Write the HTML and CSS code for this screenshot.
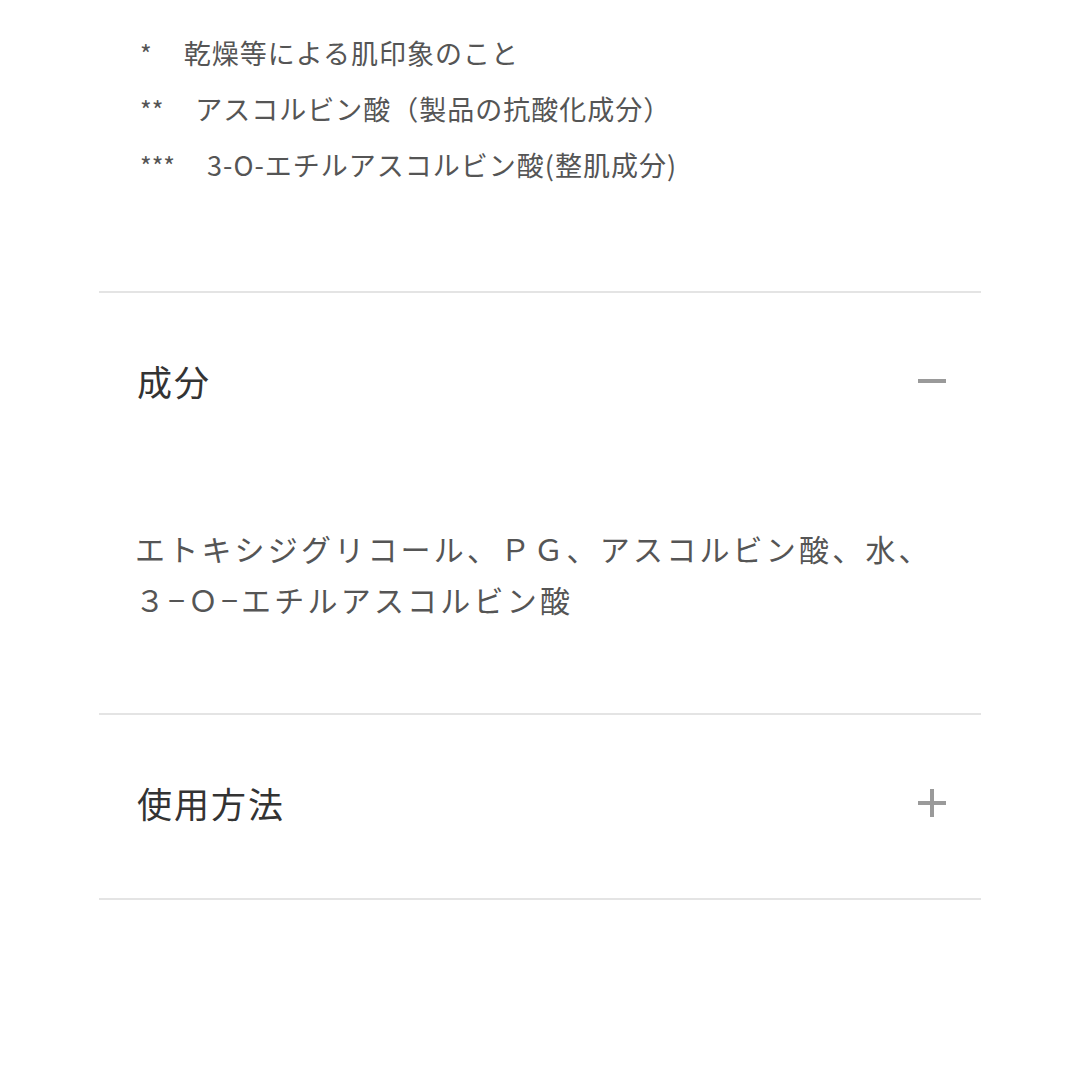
FILE: index.html
```html
<!DOCTYPE html>
<html lang="ja">
<head>
    <meta charset="UTF-8">
    <meta name="viewport" content="width=device-width, initial-scale=1.0">
    <title>成分</title>
    <link rel="stylesheet" href="styles.css">
</head>
<body>

    <div class="page">
        <ul class="notes">
            <li><span class="mark">*</span>乾燥等による肌印象のこと</li>
            <li><span class="mark">**</span>アスコルビン酸（製品の抗酸化成分）</li>
            <li><span class="mark">***</span>3-O-エチルアスコルビン酸(整肌成分)</li>
        </ul>

        <div class="accordion">
            <div class="acc-item open">
                <div class="acc-head">
                    <span class="acc-title">成分</span>
                    <span class="acc-icon minus"></span>
                </div>
                <div class="acc-body">
                    <p>エトキシジグリコール、ＰＧ、アスコルビン酸、水、<br>３−Ｏ−エチルアスコルビン酸</p>
                </div>
            </div>

            <div class="acc-item">
                <div class="acc-head">
                    <span class="acc-title">使用方法</span>
                    <span class="acc-icon plus"></span>
                </div>
            </div>
        </div>
    </div>

</body>
</html>
```

FILE: styles.css
```css
/* General Styles */
body {
    font-family: "Noto Sans CJK JP", "Noto Sans", sans-serif;
    background-color: #fff;
    color: #333;
    margin: 0;
    padding: 0;
}

.page {
    padding: 0 99px;
}

/* Footnotes */
.notes {
    list-style: none;
    margin: 0;
    padding: 25px 0 98px 41px;
    font-size: 27px;
    line-height: 56px;
    letter-spacing: 1px;
    color: #555;
}

.notes .mark {
    display: inline-block;
    margin-right: 32px;
    font-size: 25px;
    letter-spacing: 0;
}

/* Accordion */
.accordion {
    border-top: 2px solid #e4e4e4;
}

.acc-item {
    border-bottom: 2px solid #e4e4e4;
}

.acc-head {
    box-sizing: border-box;
    height: 183px;
    display: flex;
    align-items: center;
    justify-content: space-between;
    padding: 0 35px 8px 38px;
}

.acc-title {
    font-size: 35px;
    letter-spacing: 2px;
    color: #333;
}

.acc-icon {
    position: relative;
    width: 28px;
    height: 28px;
}

.acc-icon::before,
.acc-icon::after {
    content: "";
    position: absolute;
    background: #9a9a9a;
}

.acc-icon::before {
    left: 0;
    right: 0;
    top: 12px;
    height: 4px;
}

.plus::after {
    top: 0;
    bottom: 0;
    left: 12px;
    width: 4px;
}

.acc-body {
    padding: 47px 0 88px 36px;
}

.acc-body p {
    margin: 0;
    font-size: 30px;
    line-height: 51px;
    letter-spacing: 3.2px;
    color: #555;
}
```
